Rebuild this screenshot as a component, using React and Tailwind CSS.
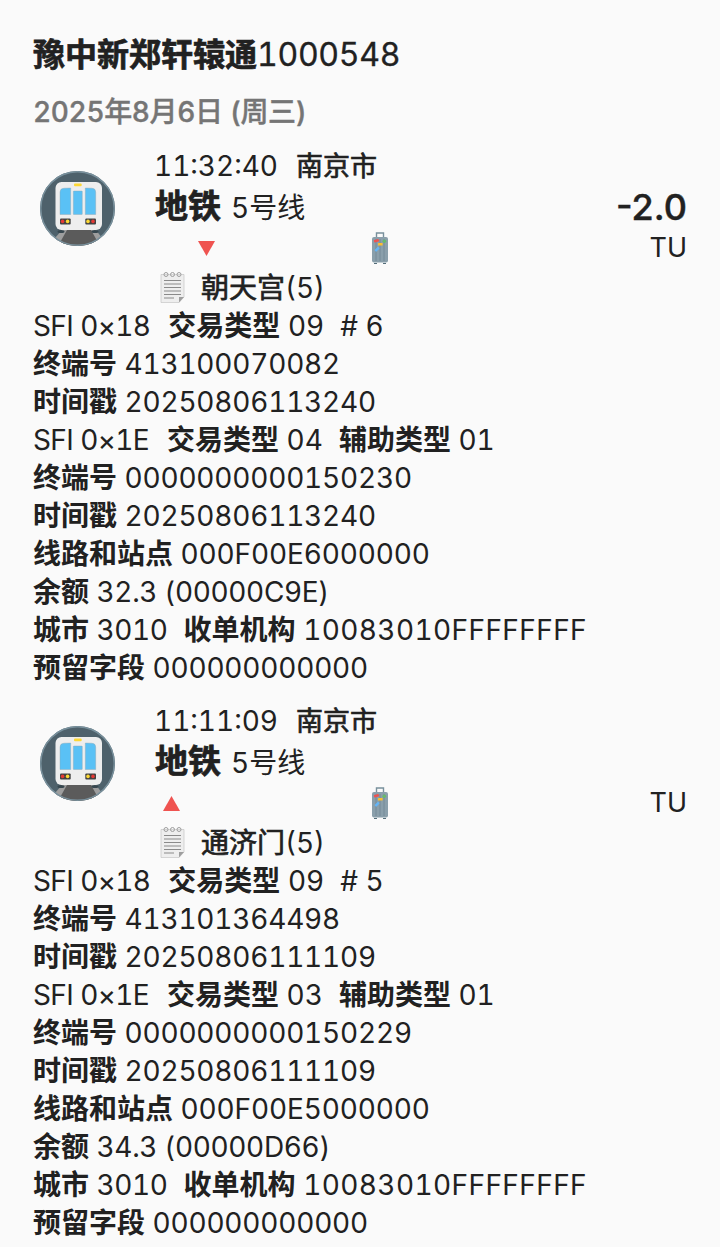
import React from 'react';

const RECORDS = [
  {
    time: '11:32:40',
    line: '5号线',
    amount: '-2.0',
    down: true,
    station: '朝天宫',
    count: '6',
    terminal: '413100070082',
    stamp: '20250806113240',
    sfi: '04',
    terminal2: '0000000000150230',
    station2: '000F00E6000000',
    balance: '32.3 (00000C9E)',
  },
  {
    time: '11:11:09',
    line: '5号线',
    amount: '',
    down: false,
    station: '通济门',
    count: '5',
    terminal: '413101364498',
    stamp: '20250806111109',
    sfi: '03',
    terminal2: '0000000000150229',
    station2: '000F00E5000000',
    balance: '34.3 (00000D66)',
  },
];

const MetroIcon = () => (
  <svg width="75" height="75" viewBox="0 0 75 75">
    <defs>
      <clipPath id="metro-circle">
        <circle cx="37.5" cy="37.5" r="37.5" />
      </clipPath>
    </defs>
    <g clipPath="url(#metro-circle)">
      <rect width="75" height="75" fill="#4e616b" />
      <path d="M8 75 L22 59 H56 L68 75 Z" fill="#9e9e9e" />
      <path d="M18 75 L27 59 H51 L60 75 Z" fill="#5b5b5b" />
    </g>
    <circle cx="37.5" cy="37.5" r="36.7" fill="none" stroke="#78909c" strokeWidth="1.4" />
    <ellipse cx="21" cy="60.5" rx="3.5" ry="1.6" fill="#37474f" />
    <ellipse cx="55" cy="60.5" rx="3.5" ry="1.6" fill="#37474f" />
    <rect x="15.5" y="11" width="46.5" height="48" rx="6" fill="#eeeeee" />
    <rect x="34" y="12.5" width="7.7" height="2.8" rx="1" fill="#fdd835" />
    <path d="M20 43.5 V21 Q20 17.5 24 17.2 L30.7 17 V43.5 Z" fill="#5ac1f5" stroke="#90a4ae" strokeWidth="0.4" />
    <rect x="33.3" y="20" width="9" height="23.5" rx="0.6" fill="#5ac1f5" stroke="#90a4ae" strokeWidth="0.4" />
    <path d="M45.3 43.5 V17 L52 17.2 Q55.7 17.5 55.7 21 V43.5 Z" fill="#5ac1f5" stroke="#90a4ae" strokeWidth="0.4" />
    <rect x="20" y="47.5" width="10.7" height="6" rx="1" fill="#424242" />
    <rect x="45.3" y="47.5" width="10.7" height="6" rx="1" fill="#424242" />
    <circle cx="22.6" cy="50.4" r="1.8" fill="#e53935" />
    <circle cx="27.6" cy="50.4" r="1.8" fill="#fdd835" />
    <circle cx="48" cy="50.4" r="1.8" fill="#fdd835" />
    <circle cx="53" cy="50.4" r="1.8" fill="#e53935" />
  </svg>
);

const Triangle = ({ down }) => (
  <svg width="17" height="15" viewBox="0 0 17 15">
    <path d={down ? 'M0 0 H17 L8.5 15 Z' : 'M0 15 H17 L8.5 0 Z'} fill="#ef5350" />
  </svg>
);

const Luggage = () => (
  <svg width="18" height="32" viewBox="0 0 18 32">
    <path d="M5.5 5 V1 H12.5 V5" fill="none" stroke="#78909c" strokeWidth="1.4" />
    <rect x="1" y="5" width="16" height="25.5" rx="2" fill="#8a9fab" />
    <path d="M5 7 V29 M9 7 V29 M13 7 V29" stroke="#6f8794" strokeWidth="0.8" />
    <rect x="3" y="31" width="3" height="1" fill="#546e7a" />
    <rect x="12" y="31" width="3" height="1" fill="#546e7a" />
    <rect x="3" y="7.5" width="5" height="2.6" rx="0.6" fill="#ef5350" transform="rotate(-14 5 9)" />
    <rect x="7" y="11" width="4.6" height="2.6" rx="0.5" fill="#fbc02d" />
    <circle cx="13.3" cy="9.3" r="1.8" fill="#66bb6a" />
    <rect x="3.4" y="16" width="5" height="2.4" rx="0.5" fill="#64b5f6" transform="rotate(-45 6 17)" />
  </svg>
);

const NoteIcon = () => (
  <svg width="25" height="32" viewBox="0 0 25 32">
    <path d="M1 3.5 H24 V26 L19 31.5 H1 Z" fill="#eeeeee" stroke="#bdbdbd" strokeWidth="0.6" />
    <path d="M19 31.5 V26 H24 Z" fill="#9e9e9e" />
    <path d="M4 9.5 H21 M4 13 H21 M4 16.5 H21 M4 20 H21 M4 23.5 H21 M4 27 H14" stroke="#8a8a8a" strokeWidth="1.1" />
    <circle cx="6" cy="3.5" r="2" fill="none" stroke="#9e9e9e" strokeWidth="1" />
    <circle cx="12.5" cy="3.5" r="2" fill="none" stroke="#9e9e9e" strokeWidth="1" />
    <circle cx="19" cy="3.5" r="2" fill="none" stroke="#9e9e9e" strokeWidth="1" />
  </svg>
);

const Line = ({ children }) => <div className="h-[38px] leading-[38px] whitespace-nowrap">{children}</div>;

const Label = ({ children, gap }) => (
  <span className={gap ? 'font-bold ml-4' : 'font-bold'}>{children}</span>
);

const Sfi = ({ children }) => <span className="tracking-[-0.6px]">{children}</span>;

const Record = ({ record }) => (
  <div className="mb-[13px]">
    <div className="flex">
      <div className="w-[122px] pl-[7px] pt-[26px] shrink-0">
        <MetroIcon />
      </div>
      <div className="flex-1 ml-[-1px]">
        <div className="h-[42px] leading-[42px] whitespace-nowrap">
          {record.time}
          <span className="ml-[18px] text-[27px] [-webkit-text-stroke:0.7px_#212121]">南京市</span>
        </div>
        <div className="flex justify-between items-center h-[40px]">
          <div className="whitespace-nowrap">
            <span className="ml-px text-[33px] font-bold [-webkit-text-stroke:0.7px_#212121]">地铁</span>
            <span className="ml-[10px]">{record.line}</span>
          </div>
          <div className="text-[36px] font-medium normal-nums [-webkit-text-stroke:0.4px_#212121]">{record.amount}</div>
        </div>
        <div className="flex items-center h-[42px]">
          <div className="w-[217px]">
            <div className={record.down ? 'pl-[44px]' : 'pl-[9px]'}>
              <Triangle down={record.down} />
            </div>
          </div>
          <Luggage />
          <div className="flex-1 text-right text-[27px]">TU</div>
        </div>
        <div className="flex items-center h-[38px]">
          <div className="pl-[6px] w-[47px] mt-[-2px]">
            <NoteIcon />
          </div>
          <span className="[-webkit-text-stroke:0.7px_#212121]">{record.station}</span>(5)
        </div>
      </div>
    </div>
    <Line>
      <Sfi>SFI 0×18</Sfi><span className="ml-[18px] font-bold">交易类型</span> 09<span className="ml-4"># {record.count}</span>
    </Line>
    <Line><Label>终端号</Label> <span className="tracking-[-0.2px]">{record.terminal}</span></Line>
    <Line><Label>时间戳</Label> <span className="tracking-[-0.2px]">{record.stamp}</span></Line>
    <Line>
      <Sfi>SFI 0×1E</Sfi><span className="ml-[18px] font-bold">交易类型</span> {record.sfi}<Label gap>辅助类型</Label> 01
    </Line>
    <Line><Label>终端号</Label> <span className="tracking-[-0.2px]">{record.terminal2}</span></Line>
    <Line><Label>时间戳</Label> <span className="tracking-[-0.2px]">{record.stamp}</span></Line>
    <Line><Label>线路和站点</Label> <span className="tracking-[-0.15px]">{record.station2}</span></Line>
    <Line><Label>余额</Label> <span className="tracking-[-0.35px]">{record.balance}</span></Line>
    <Line>
      <Label>城市</Label> <span className="tracking-[-0.4px]">3010</span><Label gap>收单机构</Label> <span className="tracking-[0.4px]">10083010FFFFFFFF</span>
    </Line>
    <Line><Label>预留字段</Label> <span className="tracking-[-0.2px]">000000000000</span></Line>
  </div>
);

const App = () => (
  <div className="w-[720px] h-[1247px] overflow-hidden bg-[#fafafa] text-[#212121] px-[33px] pt-[34px] text-[28px] tabular-nums font-['Inter','Noto_Sans_CJK_SC',sans-serif]">
    <div className="h-[42px] leading-[42px] text-[32px] whitespace-nowrap">
      <span className="font-bold [-webkit-text-stroke:0.7px_#212121]">豫中新郑轩辕通</span><span className="tracking-[-0.3px] [-webkit-text-stroke:0.3px_#212121]">1000548</span>
    </div>
    <div className="mt-[16px] h-[40px] leading-[40px] text-[28px] font-medium tracking-[-0.35px] text-[#757575] [-webkit-text-stroke:0.4px_#757575]">2025年8月6日 (周三)</div>
    <div className="mt-[13px]">
      {RECORDS.map((record) => (
        <Record key={record.time} record={record} />
      ))}
    </div>
  </div>
);

export default App;
